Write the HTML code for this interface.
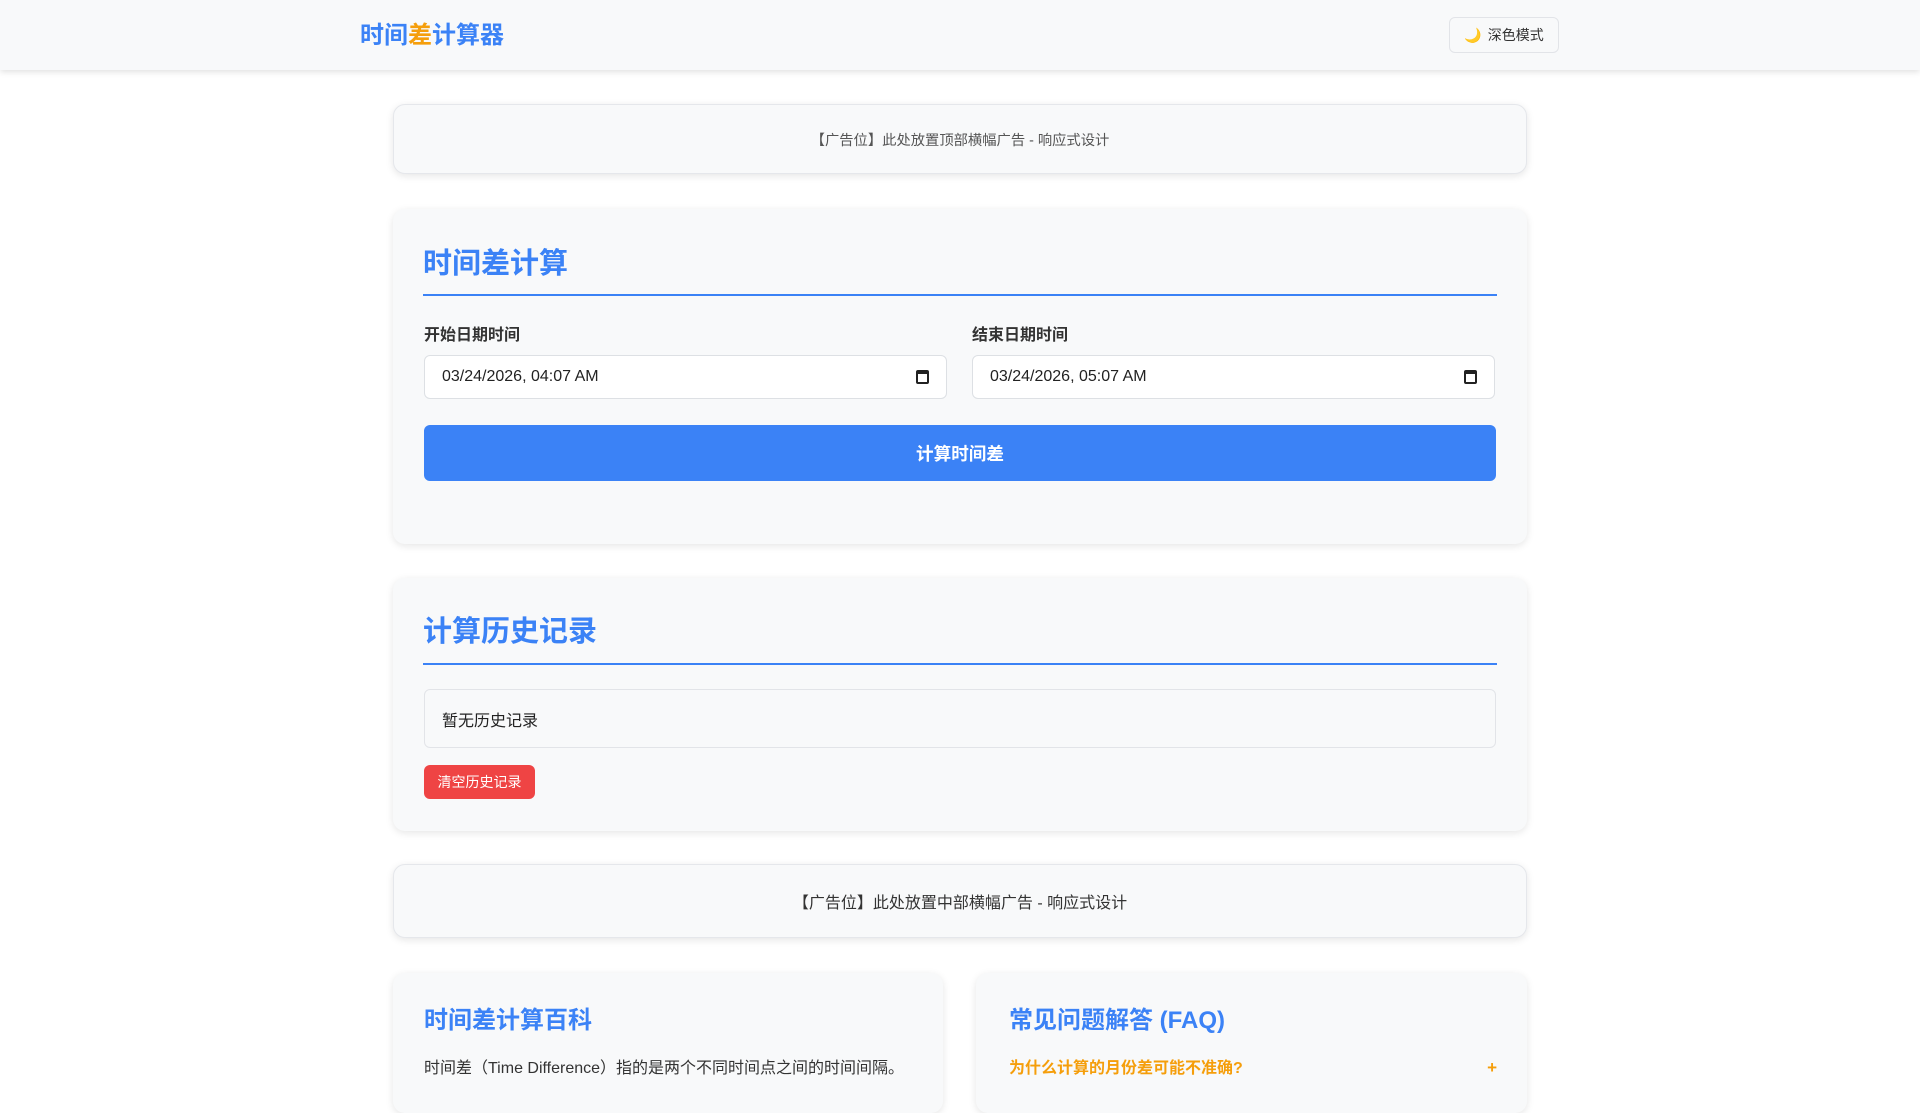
<!DOCTYPE html>
<html><head><meta charset="utf-8"><style>
*{box-sizing:border-box;margin:0;padding:0}
body{width:1920px;height:1080px;overflow:hidden;background:#fff;font-family:"Liberation Sans","Noto Sans CJK SC",sans-serif;color:#333}
.hdr{height:70px;background:#f8f9fa;box-shadow:0 2px 6px rgba(0,0,0,.12);position:relative}
.logo{position:absolute;left:360px;top:15px;font-size:24px;font-weight:bold;color:#3b82f6}
.logo span{color:#f59e0b}
.dm{position:absolute;left:1449px;top:17px;width:110px;height:36px;border:1px solid #e2e4e8;border-radius:6px;background:#f8f9fa;font-size:14px;display:flex;align-items:center;justify-content:center;gap:6px;color:#333}
.card{position:absolute;background:#f8f9fa;border-radius:12px;box-shadow:0 2px 8px rgba(0,0,0,.1)}
.ad{border:1px solid #e5e7eb;display:flex;align-items:center;justify-content:center}
h2{position:absolute;left:30px;font-size:29px;color:#3b82f6;font-weight:bold}
.line{position:absolute;left:30px;right:30px;height:2px;background:#3b82f6}
.lbl{position:absolute;font-size:16px;font-weight:bold;color:#333}
.inp{position:absolute;height:44px;width:523px;border:1px solid #dde0e4;border-radius:6px;background:#fff;font-size:16px;padding-left:17px;display:flex;align-items:center;color:#222}
.cal{position:absolute;right:17px;top:14px;width:13px;height:14px;border:2px solid #222;border-top-width:4px;border-radius:2px}
</style></head><body>
<div class="hdr"><div class="logo">时间<span>差</span>计算器</div><div class="dm"><span style="color:#f5b400">🌙</span>深色模式</div></div>

<div class="card ad" style="left:393px;top:104px;width:1134px;height:70px;font-size:14.3px;color:#555">【广告位】此处放置顶部横幅广告 - 响应式设计</div>

<div class="card" style="left:393px;top:209px;width:1134px;height:335px">
<h2 style="top:31px">时间差计算</h2>
<div class="line" style="top:85px"></div>
<div class="lbl" style="left:31px;top:112px">开始日期时间</div>
<div class="lbl" style="left:579px;top:112px">结束日期时间</div>
<div class="inp" style="left:31px;top:146px">03/24/2026, 04:07 AM<div class="cal"></div></div>
<div class="inp" style="left:579px;top:146px">03/24/2026, 05:07 AM<div class="cal"></div></div>
<div style="position:absolute;left:31px;top:216px;width:1072px;height:56px;background:#3b82f6;border-radius:6px;color:#fff;font-weight:bold;font-size:17.6px;display:flex;align-items:center;justify-content:center">计算时间差</div>
</div>

<div class="card" style="left:393px;top:578px;width:1134px;height:253px">
<h2 style="top:30px">计算历史记录</h2>
<div class="line" style="top:85px"></div>
<div style="position:absolute;left:31px;top:111px;width:1072px;height:59px;border:1px solid #e2e4e8;border-radius:6px;font-size:16px;padding-left:17px;display:flex;align-items:center;color:#222">暂无历史记录</div>
<div style="position:absolute;left:31px;top:187px;width:111px;height:34px;background:#ef4444;border-radius:6px;color:#fff;font-size:14px;display:flex;align-items:center;justify-content:center">清空历史记录</div>
</div>

<div class="card ad" style="left:393px;top:864px;width:1134px;height:74px;font-size:16px;color:#333">【广告位】此处放置中部横幅广告 - 响应式设计</div>

<div class="card" style="left:393px;top:973px;width:550px;height:140px">
<div style="position:absolute;left:31px;top:27px;font-size:24px;font-weight:bold;color:#3b82f6">时间差计算百科</div>
<div style="position:absolute;left:31px;top:81px;font-size:16px;color:#333">时间差（Time Difference）指的是两个不同时间点之间的时间间隔。</div>
</div>
<div class="card" style="left:976px;top:973px;width:551px;height:140px">
<div style="position:absolute;left:33px;top:27px;font-size:24px;font-weight:bold;color:#3b82f6">常见问题解答 (FAQ)</div>
<div style="position:absolute;left:33px;top:81px;font-size:16px;font-weight:bold;color:#f59e0b">为什么计算的月份差可能不准确?</div>
<div style="position:absolute;right:30px;top:85px;font-size:17px;font-weight:bold;color:#f59e0b">+</div>
</div>
</body></html>
